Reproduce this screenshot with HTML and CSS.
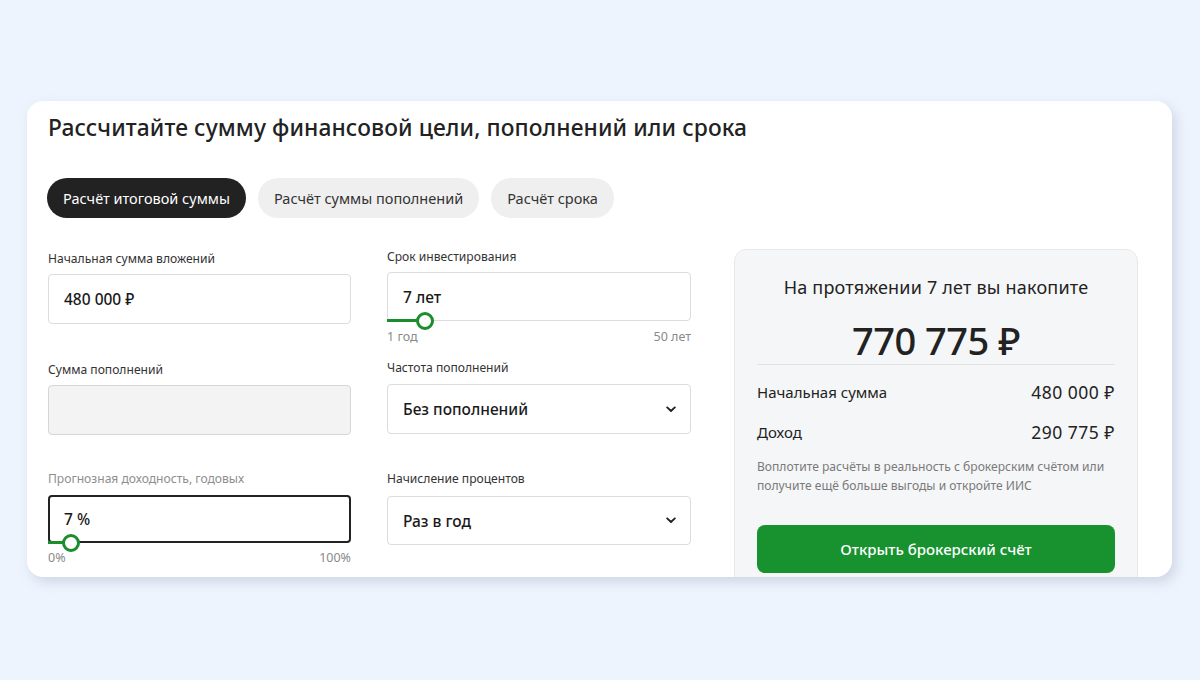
FILE: index.html
```html
<!DOCTYPE html>
<html lang="ru">
<head>
<meta charset="utf-8">
<title>Калькулятор</title>
<link rel="stylesheet" href="styles.css">
</head>
<body>
<div class="card">
  <h1 class="title">Рассчитайте сумму финансовой цели, пополнений или срока</h1>
  <div class="tabs">
    <button class="tab active">Расчёт итоговой суммы</button>
    <button class="tab">Расчёт суммы пополнений</button>
    <button class="tab">Расчёт срока</button>
  </div>
  <div class="main">
    <div class="col col-left">
      <div class="field f1">
        <div class="label">Начальная сумма вложений</div>
        <div class="input h50"><span class="value">480 000 ₽</span></div>
      </div>
      <div class="field f2">
        <div class="label">Сумма пополнений</div>
        <div class="input h50 disabled"></div>
      </div>
      <div class="field f3">
        <div class="label muted">Прогнозная доходность, годовых</div>
        <div class="input h48 focused slider-input">
          <span class="value">7 %</span>
          <div class="track" style="width: 22px"></div>
          <div class="thumb" style="left: 22px"></div>
        </div>
        <div class="range"><span>0%</span><span>100%</span></div>
      </div>
    </div>
    <div class="col col-right">
      <div class="field r1">
        <div class="label">Срок инвестирования</div>
        <div class="input h49 slider-input">
          <span class="value">7 лет</span>
          <div class="track" style="width: 37px"></div>
          <div class="thumb" style="left: 37px"></div>
        </div>
        <div class="range"><span>1 год</span><span>50 лет</span></div>
      </div>
      <div class="field r2">
        <div class="label">Частота пополнений</div>
        <div class="input h50 select"><span class="value">Без пополнений</span>
          <svg class="chev" width="10" height="7" viewBox="0 0 10 7"><path d="M1.2 1.4 L5 5 L8.8 1.4" fill="none" stroke="#222" stroke-width="1.9" stroke-linecap="round" stroke-linejoin="round"/></svg>
        </div>
      </div>
      <div class="field r3">
        <div class="label">Начисление процентов</div>
        <div class="input h49 select"><span class="value">Раз в год</span>
          <svg class="chev" width="10" height="7" viewBox="0 0 10 7"><path d="M1.2 1.4 L5 5 L8.8 1.4" fill="none" stroke="#222" stroke-width="1.9" stroke-linecap="round" stroke-linejoin="round"/></svg>
        </div>
      </div>
    </div>
    <div class="panel">
      <div class="p-head">На протяжении 7 лет вы накопите</div>
      <div class="p-total">770 775 ₽</div>
      <div class="p-row first"><span>Начальная сумма</span><span class="p-val">480 000 ₽</span></div>
      <div class="p-row"><span>Доход</span><span class="p-val">290 775 ₽</span></div>
      <p class="p-note">Воплотите расчёты в реальность с брокерским счётом или получите ещё больше выгоды и откройте ИИС</p>
      <button class="p-btn">Открыть брокерский счёт</button>
    </div>
  </div>
</div>
</body>
</html>
```

FILE: styles.css
```css
* { box-sizing: border-box; }
html, body { margin: 0; }
body {
  background: #eef4fd;
  font-family: "Noto Sans", "Open Sans", sans-serif;
  color: #1f1f1f;
  padding: 101px 0 0 27px;
  height: 680px;
  overflow: hidden;
}
.card {
  width: 1145px;
  height: 476px;
  background: #fff;
  border-radius: 16px;
  box-shadow: 4px 5px 12px rgba(150, 160, 190, 0.35);
  padding: 12px 34px 0 21px;
  overflow: hidden;
}
.title {
  margin: 0;
  font-size: 22.8px;
  line-height: 30px;
  font-weight: 500;
  color: #222;
  letter-spacing: 0.1px;
}
.tabs {
  display: flex;
  gap: 12px;
  margin-top: 35px;
  margin-left: -1px;
}
.tab {
  height: 40px;
  border: none;
  border-radius: 20px;
  background: #efefef;
  color: #333;
  font-family: inherit;
  font-size: 14.5px;
  padding: 0 16px;
  cursor: pointer;
}
.tab.active { background: #222; color: #fff; }
.main {
  display: flex;
  align-items: flex-start;
  margin-top: 31px;
}
.col { display: flex; flex-direction: column; }
.col-left { width: 303px; margin-top: 2px; }
.col-right { width: 304px; margin-left: 36px; }
.label {
  font-size: 12.1px;
  line-height: 16px;
  color: #333;
  margin-bottom: 7px;
}
.label.muted { color: #8e8e8e; }
.input {
  position: relative;
  border: 1px solid #dcdcdc;
  border-radius: 4px;
  background: #fff;
  display: flex;
  align-items: center;
  padding: 0 15px;
}
.h50 { height: 50px; }
.h49 { height: 49px; }
.h48 { height: 48px; }
.input.disabled { background: #f3f3f3; border-color: #d6d6d6; }
.input.focused { border: 2px solid #222; padding: 0 14px; }
.value { font-size: 15.5px; font-weight: 500; color: #1a1a1a; }
.select { justify-content: space-between; padding-right: 14px; }
.chev { display: block; margin-right: 0; }
.f2 { margin-top: 38px; }
.f3 { margin-top: 36px; }
.f3 .label { margin-bottom: 8px; }
.r2 { margin-top: 16px; }
.r2 .label { margin-bottom: 8px; }
.r3 { margin-top: 37px; }
.r3 .label { margin-bottom: 9px; }
.track {
  position: absolute;
  left: -1px;
  bottom: -2px;
  height: 3px;
  background: #1a8d2c;
}
.focused .track { left: -2px; bottom: -3px; }
.thumb {
  position: absolute;
  bottom: -10px;
  width: 18px;
  height: 18px;
  margin-left: -9px;
  border-radius: 50%;
  background: #fff;
  border: 3.5px solid #1a8d2c;
}
.focused .thumb { bottom: -11px; margin-left: -10px; }
.range {
  display: flex;
  justify-content: space-between;
  font-size: 12.5px;
  line-height: 14px;
  color: #8a8a8a;
  margin-top: 9px;
}
.f3 .range { margin-top: 8px; }
.panel {
  width: 404px;
  margin-left: 43px;
  height: 340px;
  background: #f5f6f8;
  border: 1px solid #e7e8ea;
  border-radius: 12px;
  padding: 25px 22px 0 22px;
  flex-shrink: 0;
}
.p-head {
  text-align: center;
  font-size: 18px;
  line-height: 24px;
  color: #222;
  letter-spacing: 0.2px;
}
.p-total {
  text-align: center;
  font-size: 38px;
  line-height: 46px;
  font-weight: 500;
  color: #222;
  margin-top: 18px;
  padding-bottom: 1px;
  border-bottom: 1px solid #e2e2e2;
  letter-spacing: -0.5px;
}
.p-row {
  display: flex;
  justify-content: space-between;
  align-items: center;
  font-size: 15px;
  line-height: 22px;
  color: #222;
  margin-top: 18px;
}
.p-row.first { margin-top: 16px; }
.p-val { font-size: 17.5px; letter-spacing: 0.5px; }
.p-note {
  margin: 14px 0 0;
  font-size: 12.1px;
  line-height: 19px;
  color: #7a7a7a;
}
.p-btn {
  display: block;
  width: 100%;
  height: 48px;
  margin-top: 30px;
  border: none;
  border-radius: 8px;
  background: #17922f;
  color: #fff;
  font-family: inherit;
  font-size: 15px;
  font-weight: 500;
  cursor: pointer;
}
```
